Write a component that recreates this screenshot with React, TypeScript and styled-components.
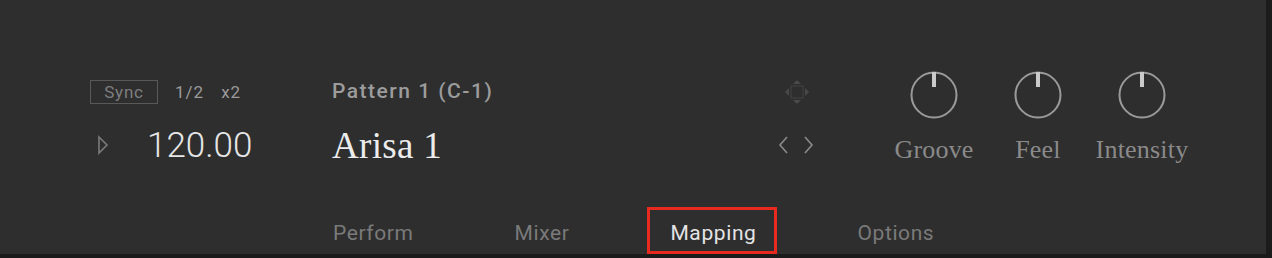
import React from "react";
import styled, { createGlobalStyle } from "styled-components";

const Global = createGlobalStyle`
  html, body { margin: 0; padding: 0; background: #1b1b1b; }
  body { width: 1272px; height: 258px; overflow: hidden; }
`;

const Frame = styled.div`
  width: 1272px;
  height: 258px;
  background: #1b1b1b;
`;

const Panel = styled.div`
  width: 1266px;
  height: 254px;
  background: #2e2e2e;
  display: flex;
  flex-direction: column;
  padding-top: 70px;
  box-sizing: border-box;
`;

const TopRow = styled.div`
  display: flex;
  padding-left: 90px;
`;

const Column = styled.div<{ $w: number; $center?: boolean }>`
  width: ${(p) => p.$w}px;
  display: flex;
  flex-direction: column;
  align-items: ${(p) => (p.$center ? "center" : "flex-start")};
`;

const TopCell = styled.div<{ $lift?: number; $indent?: number }>`
  height: 50px;
  display: flex;
  align-items: center;
  gap: 17px;
  padding-bottom: ${(p) => p.$lift ?? 0}px;
  padding-left: ${(p) => p.$indent ?? 0}px;
  box-sizing: border-box;
`;

const BottomCell = styled.div<{ $drop?: number; $indent?: number }>`
  height: 50px;
  display: flex;
  align-items: center;
  gap: 37px;
  padding-top: ${(p) => p.$drop ?? 0}px;
  padding-left: ${(p) => p.$indent ?? 0}px;
  box-sizing: border-box;
`;

const SyncBox = styled.div`
  width: 68px;
  height: 24px;
  border: 1.5px solid #595959;
  box-sizing: border-box;
  display: flex;
  align-items: center;
  justify-content: center;
  font-family: Roboto, "Liberation Sans", sans-serif;
  font-size: 17px;
  letter-spacing: 0.8px;
  color: #7e7e7e;
`;

const SmallLabel = styled.span`
  font-family: Roboto, "Liberation Sans", sans-serif;
  font-size: 17px;
  color: #9a9a9a;
  letter-spacing: 1px;
`;

const Tempo = styled.span`
  font-family: Roboto, "Liberation Sans", sans-serif;
  font-weight: 300;
  font-size: 35px;
  color: #e6e6e6;
`;

const PatternLabel = styled.span`
  font-family: Roboto, "Liberation Sans", sans-serif;
  font-weight: 500;
  font-size: 21px;
  letter-spacing: 1.5px;
  color: #9c9c9c;
`;

const Title = styled.span`
  font-family: "Liberation Serif", "DejaVu Serif", serif;
  font-size: 37px;
  color: #ececec;
  letter-spacing: 0.3px;
`;

const KnobLabel = styled.span`
  font-family: "Liberation Serif", "DejaVu Serif", serif;
  font-size: 26px;
  color: #8a8a8a;
  letter-spacing: 0.2px;
`;

const IconRow = styled.div`
  display: flex;
  gap: 14px;
`;

const Tabs = styled.div`
  display: flex;
  gap: 57px;
  margin-top: 37px;
  padding-left: 310px;
`;

const Tab = styled.div<{ $active?: boolean }>`
  height: 47px;
  padding: 4px 18px 0 20px;
  box-sizing: border-box;
  display: flex;
  align-items: center;
  font-family: Roboto, "Liberation Sans", sans-serif;
  font-size: 21px;
  letter-spacing: 0.6px;
  color: ${(p) => (p.$active ? "#e4e4e4" : "#7a7a7a")};
  border: 3px solid ${(p) => (p.$active ? "#e8291f" : "transparent")};
`;

const Knob = () => (
  <svg width="50" height="50" viewBox="0 0 50 50">
    <circle cx="25" cy="25" r="22.5" fill="none" stroke="#9a9a9a" strokeWidth="2" />
    <line x1="25" y1="2" x2="25" y2="17" stroke="#cacaca" strokeWidth="4" />
  </svg>
);

const PlayIcon = () => (
  <svg width="14" height="20" viewBox="0 0 14 20">
    <polygon points="3,2 11,10 3,18" fill="none" stroke="#7a7a7a" strokeWidth="1.6" />
  </svg>
);

const MoveIcon = () => (
  <svg width="26" height="26" viewBox="0 0 26 26">
    <g fill="#494949">
      <polygon points="13,1 17,5 9,5" />
      <polygon points="13,25 17,21 9,21" />
      <polygon points="1,13 5,9 5,17" />
      <polygon points="25,13 21,9 21,17" />
    </g>
    <rect x="7" y="7" width="12" height="12" fill="none" stroke="#3d3d3d" strokeWidth="1.5" />
  </svg>
);

const Chevron = ({ dir }: { dir: "left" | "right" }) => (
  <svg width="11" height="20" viewBox="0 0 11 20">
    <polyline
      points={dir === "left" ? "9,2 2,10 9,18" : "2,2 9,10 2,18"}
      fill="none"
      stroke="#8a8a8a"
      strokeWidth="1.6"
    />
  </svg>
);

const knobs = ["Groove", "Feel", "Intensity"];
const tabs = ["Perform", "Mixer", "Mapping", "Options"];

export default function App() {
  return (
    <>
      <Global />
      <Frame>
        <Panel>
          <TopRow>
            <Column $w={242}>
              <TopCell $lift={6}>
                <SyncBox>Sync</SyncBox>
                <SmallLabel>1/2</SmallLabel>
                <SmallLabel>x2</SmallLabel>
              </TopCell>
              <BottomCell $indent={6}>
                <PlayIcon />
                <Tempo>120.00</Tempo>
              </BottomCell>
            </Column>
            <Column $w={446}>
              <TopCell $lift={8}>
                <PatternLabel>Pattern 1 (C-1)</PatternLabel>
              </TopCell>
              <BottomCell>
                <Title>Arisa 1</Title>
              </BottomCell>
            </Column>
            <Column $w={104}>
              <TopCell $lift={6} $indent={6}>
                <MoveIcon />
              </TopCell>
              <BottomCell>
                <IconRow>
                  <Chevron dir="left" />
                  <Chevron dir="right" />
                </IconRow>
              </BottomCell>
            </Column>
            {knobs.map((k) => (
              <Column key={k} $w={104} $center>
                <TopCell>
                  <Knob />
                </TopCell>
                <BottomCell $drop={10}>
                  <KnobLabel>{k}</KnobLabel>
                </BottomCell>
              </Column>
            ))}
          </TopRow>
          <Tabs>
            {tabs.map((t) => (
              <Tab key={t} $active={t === "Mapping"}>
                {t}
              </Tab>
            ))}
          </Tabs>
        </Panel>
      </Frame>
    </>
  );
}
